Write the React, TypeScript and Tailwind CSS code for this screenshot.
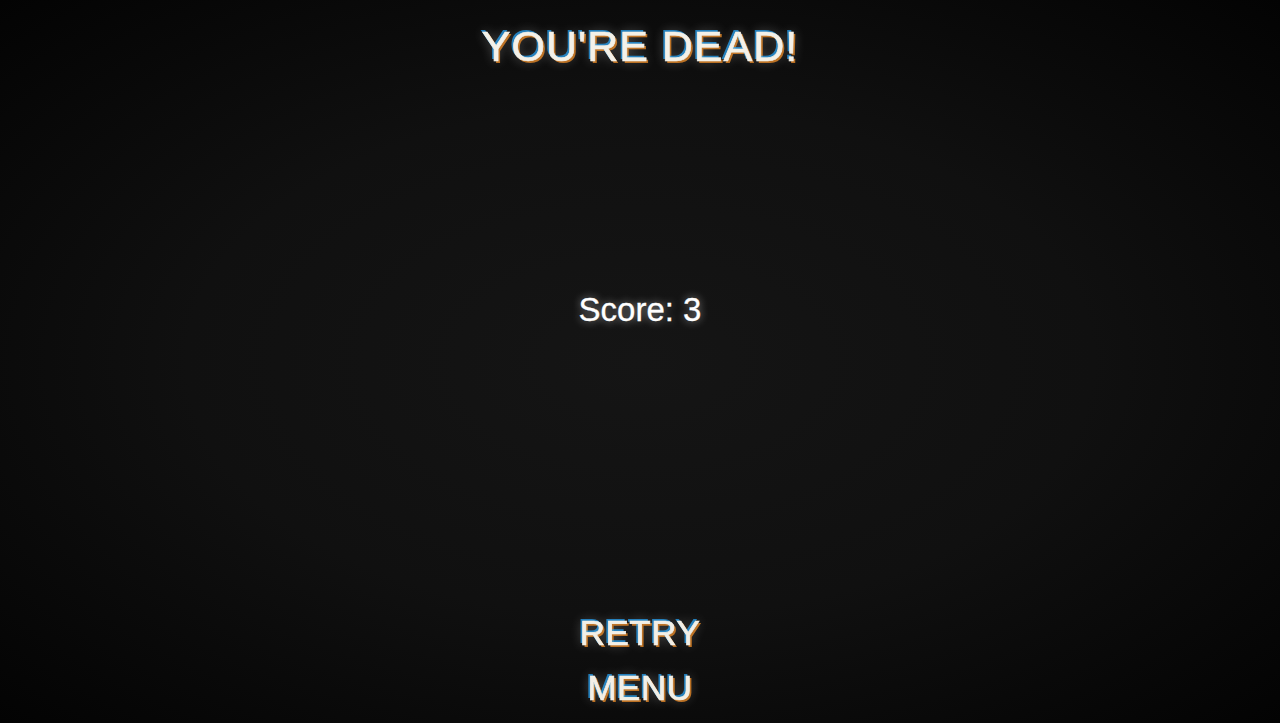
// split-colour fringe + soft glow, like an old CRT
const aberration =
	'[text-shadow:-2px_-2px_0_rgba(40,170,255,0.7),2px_2px_0_rgba(255,150,40,0.7),0_0_12px_rgba(255,255,255,0.4)] [-webkit-text-stroke:0.7px_#f4f1e8] blur-[0.4px]';

const MenuButton = ({ label }: { label: string }) => (
	<button
		type="button"
		className={`bg-transparent text-[35px] leading-none tracking-[0.5px] text-[#f2efe6] ${aberration}`}
	>
		{label}
	</button>
);

const App = () => {
	return (
		<div className="flex h-[723px] w-full flex-col items-center overflow-hidden bg-[radial-gradient(ellipse_at_center,#151515_0%,#101010_50%,#030303_100%)] font-['Liberation_Sans',Arial,sans-serif]">
			<h1 className={`pt-[25px] text-[43px] leading-none tracking-[1px] text-[#f4f1e8] ${aberration}`}>
				YOU&apos;RE DEAD!
			</h1>
			<p className="mt-[225px] text-[33px] leading-none text-white [text-shadow:0_0_8px_rgba(255,255,255,0.55)] [-webkit-text-stroke:0.3px_white]">
				Score: 3
			</p>
			<div className="mt-[289px] flex flex-col items-center gap-[20px]">
				<MenuButton label="RETRY" />
				<MenuButton label="MENU" />
			</div>
		</div>
	);
};

export default App;
